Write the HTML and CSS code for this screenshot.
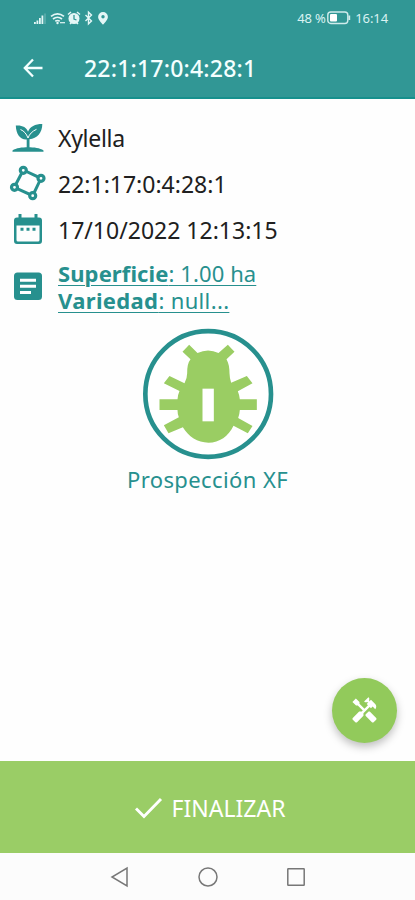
FILE: index.html
```html
<!DOCTYPE html>
<html lang="es">
<head>
<meta charset="utf-8">
<meta name="viewport" content="width=device-width, initial-scale=1">
<title>22:1:17:0:4:28:1</title>
<link rel="stylesheet" href="styles.css">
</head>
<body>
<div class="screen">
  <header class="header">
    <div class="status">
      <svg class="status-icons" width="76" height="16" viewBox="0 0 76 16" fill="#e4f6f6">
        <path d="M1 12h1.800v2H1zM3.500 10.500h1.800V14H3.500zM6 8h1.800v6H6zM8.500 5.500h1.800V14H8.500z"/>
        <path opacity=".4" d="M11.500 3.500h1V14h-1z"/>
        <g fill="none" stroke="#e4f6f6" stroke-width="1.700"><path d="M18 6.300q6.500-5 13 0M20 9q4.500-3.500 9 0M22.300 11.300q2.200-1.600 4.400 0"/><path d="M27 12.700h5" stroke-width="1.200"/></g>
        <circle cx="24.500" cy="13" r="1.200"/>
        <circle cx="41" cy="8.500" r="5.500"/>
        <path d="M35 4.500l3-2.500M47 4.500L44 2M37 14l1.500-1.500M45 14l-1.500-1.500" stroke="#e4f6f6" stroke-width="1.500"/>
        <path d="M41 5v4l2.500 1" fill="none" stroke="#319795" stroke-width="1.300"/>
        <path d="M52.500 5l6 6-3 2.800V2.200l3 2.800-6 6" fill="none" stroke="#e4f6f6" stroke-width="1.400"/>
        <path fill-rule="evenodd" d="M70 2a4.900 4.900 0 0 0-4.900 4.900c0 3.200 4.900 7.700 4.900 7.700s4.900-4.500 4.900-7.700A4.900 4.900 0 0 0 70 2zm0 3a1.700 1.700 0 1 1 0 3.400 1.700 1.700 0 0 1 0-3.400z"/>
      </svg>
      <div class="status-right">
        <span class="percent">48 %</span>
        <svg width="24" height="14" viewBox="0 0 24 14"><rect x=".8" y="1" width="20" height="11.500" rx="3" fill="none" stroke="#cfecec" stroke-width="1.400"/><rect x="3" y="3" width="7" height="7.500" rx="1" fill="#fff"/><path d="M22.300 4.500v4.500" stroke="#cfecec" stroke-width="1.800"/></svg>
        <span class="clock">16:14</span>
      </div>
    </div>
    <div class="toolbar">
      <svg width="20" height="20" viewBox="0 0 20 20" fill="none" stroke="#f4ffff" stroke-width="2.300"><path d="M19.500 10H2M10 1.500L1.800 10l8.200 8.500"/></svg>
      <h1 class="title">22:1:17:0:4:28:1</h1>
    </div>
  </header>

  <main class="content">
    <div class="row">
      <svg class="icon" viewBox="0 0 36 36" fill="#27908e"><path d="M2.500 31.700v-1.200C6 28 12 27.300 18 27.300s12 .7 15.500 3.200v1.200z"/><path d="M16.700 28v-8.500C10.500 20 6 14.500 5.800 5.500c6.200-.5 10.700 1.500 12.200 6.300C20 6.500 25 4 32.300 4c0 9-5.300 14.500-12.800 15.200V28z"/><path d="M10.500 9.500c3.500 1.500 5.800 4 7.500 8.500 1.500-4 4.200-6.700 8.500-8.700" fill="none" stroke="#fff" stroke-width="1"/></svg>
      <span class="label label-name">Xylella</span>
    </div>
    <div class="row">
      <svg class="icon icon-plot" viewBox="0 0 36 36" fill="none" stroke="#27908e"><path d="M13.300 4L31 12.300 22.700 29.700 4.300 21.300z" stroke-width="3"/><g fill="#fff" stroke-width="3.200"><circle cx="13.300" cy="4.300" r="3"/><circle cx="31" cy="12.300" r="3"/><circle cx="22.700" cy="29.700" r="3"/><circle cx="4.500" cy="21.300" r="3"/></g></svg>
      <span class="label label-code">22:1:17:0:4:28:1</span>
    </div>
    <div class="row">
      <svg class="icon" viewBox="0 0 36 36" fill="#27908e"><path fill-rule="evenodd" d="M8.500 2h3v3.500h13V2h3v3.500H29q3 0 3 3V29q0 3-3 3H7q-3 0-3-3V8.500q0-3 3-3h1.500zM6.500 13.500v14.500q0 1.500 1.500 1.500h20q1.500 0 1.500-1.500V13.500z"/><path d="M10.500 15.800h3v3h-3zM16.500 15.800h3v3h-3zM22.500 15.800h3v3h-3z"/></svg>
      <span class="label label-date">17/10/2022 12:13:15</span>
    </div>
    <div class="row row-details">
      <svg class="icon" viewBox="0 0 36 36"><rect x="4" y="3.500" width="28" height="27.500" rx="3.500" fill="#27908e"/><path d="M10 11.200h16M10 17.300h16M10 23.500h11" stroke="#fff" stroke-width="3"/></svg>
      <a class="details"><span class="line line-area"><b>Superficie</b>: 1.00 ha</span><span class="line line-variety"><b>Variedad</b>: null...</span></a>
    </div>

    <div class="action">
      <svg width="134" height="134" viewBox="62.500 21 402 402"><circle cx="264" cy="222" r="188.500" fill="#fff" stroke="#27908e" stroke-width="14"/>
        <path fill="#9acd63" d="M201 160C201 142 203 128 211 118L187 95 207 74 232 99Q264 84 295 99L323 74 343 95 319 118C326 130 328 144 328 160Q328 172 333 188L380 168 397 190 353 214Q358 226 359 238H410V270H359Q358 284 354 294L397 318 383 340 340 317C325 348 298 368 265 368S205 350 188 322L145 340 131 316 176 292Q172 282 172 270H118V238H172Q173 224 178 213L131 190 148 168 193 190Q201 175 201 160Z"/>
        <rect x="247" y="206" width="34" height="98" fill="#fff"/></svg>
      <span class="action-label">Prospección XF</span>
    </div>
  </main>

  <button class="fab" aria-label="Herramientas">
    <svg width="29" height="29" viewBox="0 0 24 24" fill="#fff"><path d="m21.670 18.170-5.300-5.300h-.99l-2.540 2.540v.99l5.300 5.300c.39.390 1.020.390 1.410 0l2.120-2.120c.39-.38.39-1.020 0-1.410zM17.340 10.190l1.410-1.410 2.120 2.120c1.170-1.170 1.170-3.070 0-4.240l-3.540-3.540-1.410 1.410V1.710L15.220 1l-3.540 3.540.71.710h2.830l-1.410 1.410 1.060 1.060-2.890 2.890-4.130-4.130V5.060L4.830 2.040 2 4.870 5.030 7.900h1.410l4.130 4.130-.85.850H7.600l-5.300 5.300c-.39.390-.39 1.020 0 1.410l2.120 2.120c.39.390 1.020.390 1.410 0l5.300-5.300v-2.120l5.150-5.150 1.060 1.050z"/></svg>
  </button>

  <button class="finish">
    <svg width="28" height="22" viewBox="0 0 28 22" fill="none" stroke="#fff" stroke-width="2.900"><path d="M1 11.500l8 8L26 2"/></svg>
    <span>FINALIZAR</span>
  </button>
  <nav class="nav">
    <svg width="20" height="22" viewBox="0 0 20 22"><path d="M17 2v18L2 11z"/></svg>
    <svg width="20" height="20" viewBox="0 0 20 20"><circle cx="10" cy="10" r="9"/></svg>
    <svg width="20" height="20" viewBox="0 0 20 20"><rect x="1.800" y="1.800" width="16.400" height="16.400" rx=".5"/></svg>
  </nav>
</div>
</body>
</html>
```
FILE: styles.css
```css
* { box-sizing: border-box; }
body { margin: 0; font-family: "Noto Sans", sans-serif; }
.screen { position: relative; display: flex; flex-direction: column; width: 415px; height: 900px; overflow: hidden; background: #fefefe; }
.header { height: 99px; background: #319795; border-bottom: 2px solid #16908d; color: #f4ffff; }
.status { display: flex; justify-content: space-between; align-items: center; height: 36px; padding: 0 27px 0 33px; }
.status-right { display: flex; align-items: center; font-size: 13px; color: #daf3f3; }
.percent { width: 30px; letter-spacing: -0.2px; white-space: nowrap; }
.clock { margin-left: 4px; letter-spacing: -0.1px; }
.toolbar { display: flex; align-items: center; gap: 41px; height: 64px; padding-left: 23px; }
.title { margin: 0; font-size: 23px; font-weight: 500; line-height: 30px; letter-spacing: 0.2px; white-space: nowrap; }
.content { flex: 1; padding: 16px 10px 0; }
.row { display: flex; align-items: center; gap: 12px; height: 46px; }
.icon { flex: none; width: 36px; height: 36px; }
.icon-plot { overflow: visible; }
.label { font-size: 23px; line-height: 30px; color: #202020; white-space: nowrap; }
.label-name { letter-spacing: -0.3px; }
.row-details { height: 66px; padding-top: 2px; }
.details { color: #27908e; font-size: 22px; line-height: 27px; }
.line { display: block; width: max-content; white-space: nowrap; text-decoration: underline; text-decoration-thickness: 1px; text-underline-offset: 3px; }
.line-area { letter-spacing: 0.1px; }
.line-variety { letter-spacing: 0.35px; }
.action { display: flex; flex-direction: column; align-items: center; margin-top: 8px; }
.action-label { margin-top: 3px; color: #27908e; font-size: 22px; line-height: 30px; letter-spacing: 0.4px; }
.fab { position: absolute; left: 332px; top: 678px; display: flex; align-items: center; justify-content: center; width: 65px; height: 65px; padding: 0; border: 0; border-radius: 50%; background: #92ca5b; box-shadow: 0 4px 8px rgba(0, 0, 0, 0.25); }
.finish { display: flex; align-items: center; justify-content: center; gap: 9px; height: 92px; padding: 2px 0 0 5px; border: 0; background: #9acd66; color: #fff; font: 23px/30px "Noto Sans", sans-serif; }
.nav { display: flex; align-items: center; justify-content: center; gap: 68px; height: 47px; background: #fcfcfc; }
.nav svg { fill: none; stroke: #777; stroke-width: 1.500px; }
```
